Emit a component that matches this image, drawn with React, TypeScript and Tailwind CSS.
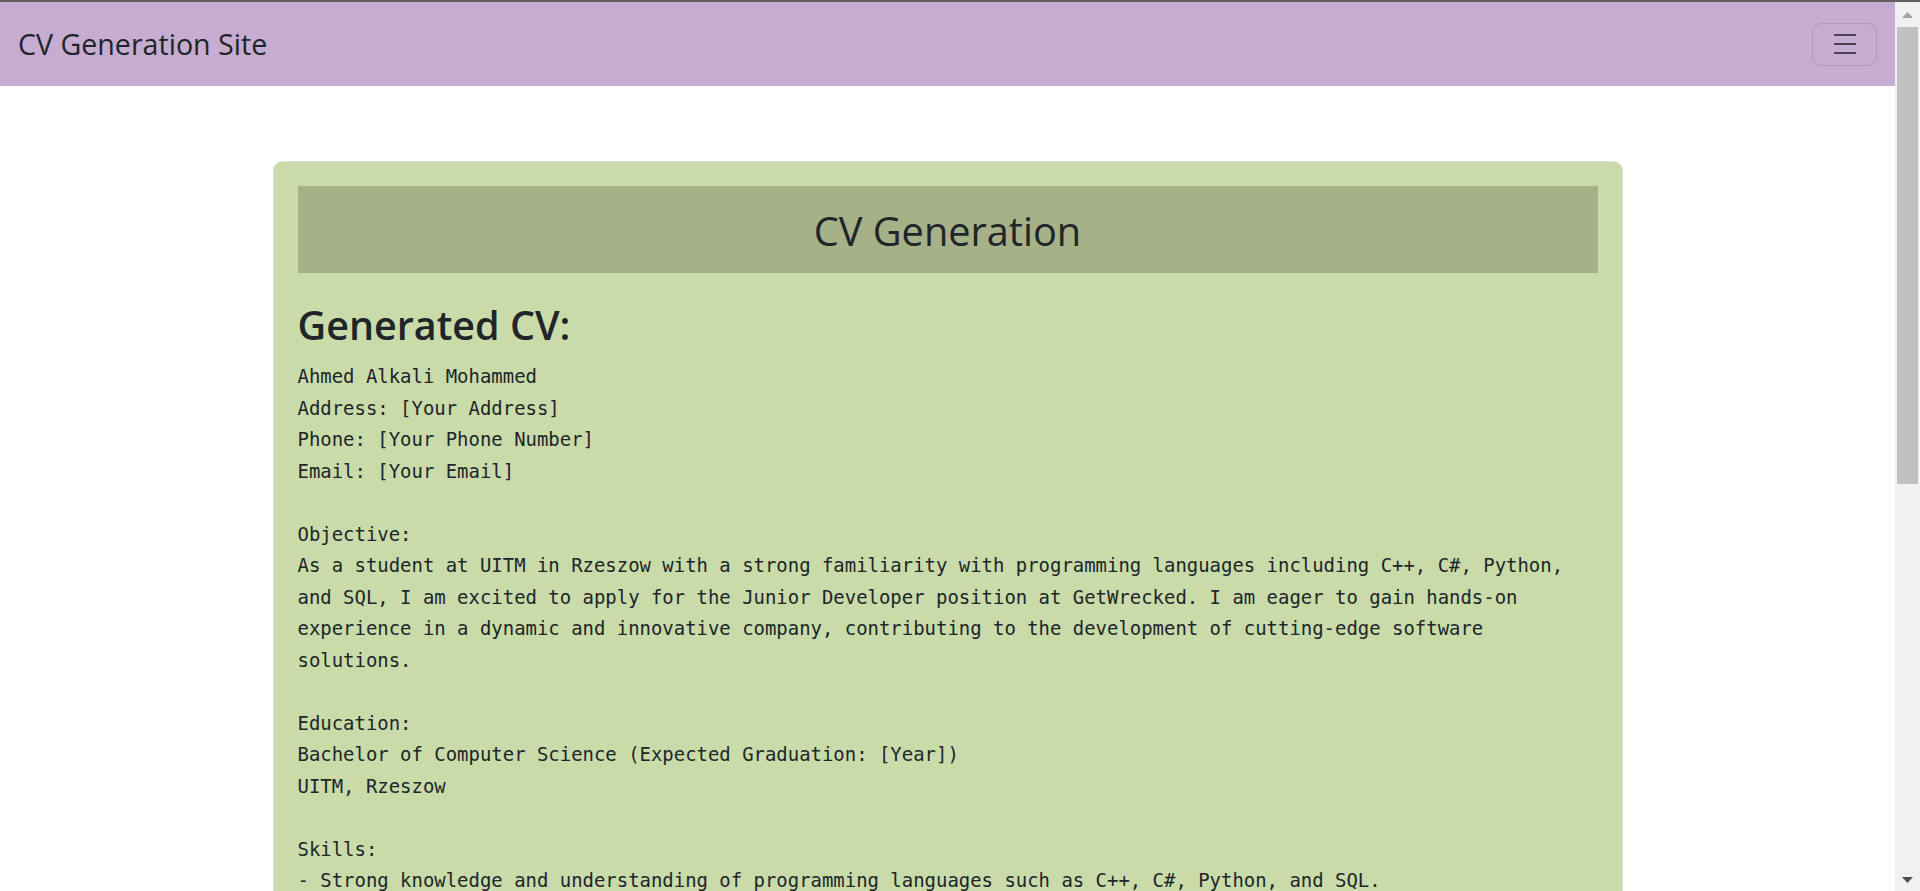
import React from "react";

const cvLines = [
  "Ahmed Alkali Mohammed",
  "Address: [Your Address]",
  "Phone: [Your Phone Number]",
  "Email: [Your Email]",
  "",
  "Objective:",
  "As a student at UITM in Rzeszow with a strong familiarity with programming languages including C++, C#, Python,",
  "and SQL, I am excited to apply for the Junior Developer position at GetWrecked. I am eager to gain hands-on",
  "experience in a dynamic and innovative company, contributing to the development of cutting-edge software",
  "solutions.",
  "",
  "Education:",
  "Bachelor of Computer Science (Expected Graduation: [Year])",
  "UITM, Rzeszow",
  "",
  "Skills:",
  "- Strong knowledge and understanding of programming languages such as C++, C#, Python, and SQL.",
];

const Navbar = () => {
  return (
    <nav className="h-[84px] bg-[#c5acd0] flex items-center justify-between pl-[18px] pr-[18px]">
      <span className="text-[28.6px] text-[#212529] leading-none">CV Generation Site</span>
      <button className="w-[65px] h-[43px] rounded-[9px] border border-[#b198bd] flex flex-col items-center justify-center gap-[7px]">
        <span className="block w-[22px] h-[2px] bg-[#4b4352]" />
        <span className="block w-[22px] h-[2px] bg-[#4b4352]" />
        <span className="block w-[22px] h-[2px] bg-[#4b4352]" />
      </button>
    </nav>
  );
};

const Scrollbar = () => {
  return (
    <div className="w-[25px] bg-[#f1f1f1] flex flex-col items-center">
      <svg width="11" height="6" viewBox="0 0 11 6" className="mt-[10px]">
        <polygon points="5.5,0 11,6 0,6" fill="#a3a3a3" />
      </svg>
      <div className="mt-[9px] w-[21px] h-[457px] bg-[#c1c1c1]" />
      <div className="flex-1" />
      <svg width="11" height="6" viewBox="0 0 11 6" className="mb-[8px]">
        <polygon points="0,0 11,0 5.5,6" fill="#505050" />
      </svg>
    </div>
  );
};

export default function App() {
  return (
    <div className="h-[891px] w-[1920px] overflow-hidden flex flex-col bg-white font-['Open_Sans',sans-serif] text-[#212529]">
      <div className="h-[2px] bg-[#5f5f5f]" />
      <div className="flex flex-1 min-h-0">
        <div className="flex-1 min-w-0 overflow-hidden">
          <Navbar />
          <div className="w-[1350px] mx-auto mt-[75px] bg-[#c8dba9] border border-[#d8dcd4] rounded-[10px] p-6">
            <div className="h-[87px] bg-[#a6b188] flex items-center justify-center">
              <h1 className="mt-[4px] text-[39.7px] leading-none font-normal">CV Generation</h1>
            </div>
            <h3 className="mt-[28px] mb-[12px] text-[39.5px] leading-[48px] font-semibold">Generated CV:</h3>
            <div className="font-['DejaVu_Sans_Mono',monospace] text-[18.95px] leading-[31.5px] whitespace-pre">
              {cvLines.map((line, i) => (
                <div key={i} className="h-[31.5px]">
                  {line}
                </div>
              ))}
            </div>
          </div>
        </div>
        <Scrollbar />
      </div>
    </div>
  );
}
